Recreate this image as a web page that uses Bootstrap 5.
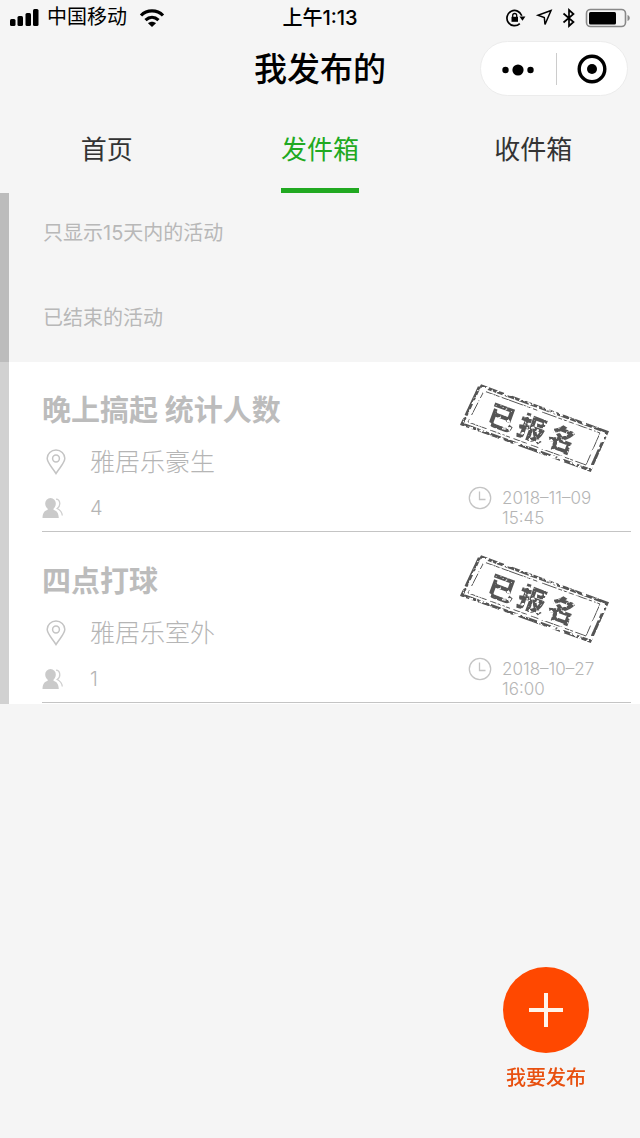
<!DOCTYPE html>
<html lang="zh-CN">
<head>
<meta charset="utf-8">
<meta name="viewport" content="width=device-width, initial-scale=1">
<title>我发布的</title>
<link href="https://cdn.jsdelivr.net/npm/bootstrap@5.3.0/dist/css/bootstrap.min.css" rel="stylesheet">
<style>
  body { background: #f5f5f5; color: #000; font-family: Inter, "Noto Sans CJK SC", sans-serif; }
  .status-bar { height: 35px; font-size: 20px; line-height: 37px; padding: 0 9px; }
  .status-side { flex: 1 1 0; }
  .clock-text { font-weight: 500; }
  .title-bar { height: 67px; padding: 6px 12px 6px; }
  .title-bar h1 { font-size: 33px; line-height: 56px; font-weight: 500; }
  .capsule { width: 148px; height: 55px; background: #fff; border: 1px solid #ececec; border-radius: 28px; }
  .capsule button { border: 0; background: none; padding: 0; height: 100%; }
  .capsule-line { width: 1px; height: 32px; background: #ccc; }
  .tab-row { height: 91px; font-size: 26px; }
  .tab-row a { color: #333; text-decoration: none; line-height: 38px; padding: 29px 0 19px; border-bottom: 5px solid transparent; }
  .tab-row a.active { color: #21a921; border-color: #21a921; }
  .notice { border-left: 9px solid #bcbcbc; padding: 25px 0 0 34px; height: 169px; color: #b8b8b8; font-size: 20px; }
  .notice p { line-height: 30px; margin-bottom: 55px; }
  .activity { background: #fff; border-left: 9px solid #d1d1d1; padding: 0 9px 1px 33px; color: #b5b5b5; }
  .activity-body { border-bottom: 1px solid #c4c4c4; height: 170px; }
  .activity h2 { font-size: 29px; line-height: 36px; font-weight: 700; margin: 31px 0 15px; color: #bcbcbc; }
  .place { font-size: 25px; line-height: 36px; font-weight: 300; margin-bottom: 16px; }
  .people { font-size: 20px; line-height: 24px; font-weight: 300; }
  .icon-cell { width: 48px; }
  .side-col { width: 171px; padding-top: 21px; }
  .when { font-size: 17px; line-height: 20px; font-weight: 300; gap: 10px; padding-left: 8px; margin-top: 13px; }
  .when time { width: 104px; padding-top: 2px; }
  .stamp-text { font: 900 28px "Noto Sans CJK SC", sans-serif; }
  .publish { right: 51px; bottom: 48px; border: 0; background: none; padding: 0; width: 86px; color: #e8500f; font-size: 20px; line-height: 24px; font-weight: 500; }
  .publish-disc { height: 86px; background: #ff4800; margin-bottom: 13px; }
</style>
</head>
<body>
<svg width="0" height="0" class="position-absolute" aria-hidden="true">
  <defs>
    <filter id="worn" x="0" y="0" width="100%" height="100%">
      <feTurbulence type="fractalNoise" baseFrequency="0.22" numOctaves="3" seed="8" result="n"/>
      <feColorMatrix in="n" type="matrix" values="0 0 0 0 0  0 0 0 0 0  0 0 0 0 0  9 0 0 0 -3.5" result="m"/>
      <feComposite in="SourceGraphic" in2="m" operator="in"/>
    </filter>
    <filter id="speckled" x="0" y="0" width="100%" height="100%">
      <feTurbulence type="fractalNoise" baseFrequency="0.25" numOctaves="2" seed="3" result="n"/>
      <feColorMatrix in="n" type="matrix" values="0 0 0 0 0  0 0 0 0 0  0 0 0 0 0  8 0 0 0 -2.4" result="m"/>
      <feComposite in="SourceGraphic" in2="m" operator="in"/>
    </filter>
    <symbol id="stamp" viewBox="0 0 150 90">
      <g filter="url(#worn)" fill="none" stroke="#555">
        <rect width="150" height="90" stroke="none" fill="none"/>
        <path d="M20 2.500 L147 49 L130 87 L2 41 Z" stroke-width="3"/>
        <path d="M24 8 L140 50 L126 82 L8 39 Z" stroke-width="1"/>
      </g>
      <g filter="url(#speckled)">
        <text class="stamp-text" x="-46 -14 18" y="10" transform="translate(72 46) rotate(20)" fill="#555">已报名</text>
      </g>
    </symbol>
    <symbol id="pin" viewBox="0 0 20 26">
      <path d="M10 24.500C6 18 1.200 14 1.200 9.300a8.800 8.300 0 0 1 17.600 0C18.800 14 14 18 10 24.500Z" fill="none" stroke="#c4c4c4" stroke-width="1.500"/>
      <circle cx="10" cy="9.500" r="3.400" fill="none" stroke="#c4c4c4" stroke-width="1.500"/>
    </symbol>
    <symbol id="people" viewBox="0 0 21 22">
      <path d="M8.500 1a5.300 5.300 0 0 1 5.300 5.600c0 2.500-1 4-2.300 5.200v1c3 1.200 5 2.400 5.300 8.200H.5C.7 15.200 2.700 14 5.700 12.800v-1C4.300 10.600 3.200 9 3.200 6.600A5.300 5.300 0 0 1 8.500 1Z" fill="#cacaca"/>
      <path d="M14 2.200c4.600.2 5 7 1.200 9.300 3.200 1.800 4.800 3.300 5.100 7" fill="none" stroke="#cfcfcf" stroke-width="1.300"/>
    </symbol>
    <symbol id="clock" viewBox="0 0 24 24">
      <circle cx="12" cy="12" r="10.700" fill="none" stroke="#c4c4c4" stroke-width="1.300"/>
      <path d="M11.500 5.500V13.500H17.500" fill="none" stroke="#c4c4c4" stroke-width="1.300"/>
    </symbol>
  </defs>
</svg>

<header>
  <div class="status-bar d-flex">
    <div class="status-side d-flex align-items-center">
      <svg width="30" height="18" viewBox="0 0 30 18" aria-hidden="true"><rect x="1" y="10" width="5.500" height="7" rx="1.500"/><rect x="8.500" y="7" width="5.500" height="10" rx="1.500"/><rect x="16.500" y="4" width="5.500" height="13" rx="1.500"/><rect x="24" y="0" width="5.500" height="17" rx="1.500"/></svg>
      <span class="ms-2 me-2">中国移动</span>
      <svg class="ms-1" width="26" height="18" viewBox="0 0 26 18" fill="none" stroke="#000" stroke-width="3.200" aria-hidden="true"><path d="M2 6.500C8 .4 18 .4 24 6.500M6.500 11.200c4-3.700 9-3.700 13 0"/><path d="M9 14.200c2.300-2 5.700-2 8 0L13 18Z" fill="#000" stroke="none"/></svg>
    </div>
    <span class="clock-text">上午1:13</span>
    <div class="status-side d-flex align-items-center justify-content-end">
      <svg width="126" height="22" viewBox="0 0 126 22" fill="none" stroke="#000" aria-hidden="true">
        <path d="M14.800 16.600A7.600 7.600 0 1 1 16.800 8.800" stroke-width="1.700"/><path d="M14.400 9.500h6l-2.900 4.200Z" fill="#000" stroke="none"/>
        <rect x="6.500" y="9.800" width="6.500" height="5" fill="#000" stroke="none"/><path d="M7.700 10V8.500a2 2 0 0 1 4 0V10" stroke-width="1.300"/>
        <path d="M46 3.500 33 8.300l6.300 2.200L40 17.500Z" stroke-width="1.500"/>
        <path d="M58.500 6.500l10 8.500-4.500 4V3l4.500 4-10 8.500" stroke-width="1.700"/>
        <rect x="81.500" y="2.500" width="39" height="17" rx="4" stroke="#888" stroke-width="1.600"/><rect x="84" y="5" width="27" height="12.500" rx="1.500" fill="#000" stroke="none"/><path d="M122.500 8v6c3-1 3-5 0-6Z" fill="#888" stroke="none"/>
      </svg>
    </div>
  </div>
  <div class="title-bar d-flex">
    <div class="status-side"></div>
    <h1 class="m-0">我发布的</h1>
    <div class="status-side d-flex justify-content-end">
      <div class="capsule d-flex align-items-center">
        <button type="button" class="flex-fill" aria-label="更多"><svg width="34" height="14" viewBox="0 0 34 14"><circle cx="4.500" cy="7" r="3.200"/><circle cx="17" cy="7" r="5.600"/><circle cx="29.500" cy="7" r="3.200"/></svg></button>
        <span class="capsule-line"></span>
        <button type="button" class="flex-fill" aria-label="关闭"><svg width="30" height="30" viewBox="0 0 30 30"><circle cx="15" cy="15" r="12.800" fill="none" stroke="#000" stroke-width="3.400"/><circle cx="15" cy="15" r="5"/></svg></button>
      </div>
    </div>
  </div>
  <nav class="tab-row row g-0 text-center">
    <div class="col"><a href="#" class="d-inline-block">首页</a></div>
    <div class="col"><a href="#" class="d-inline-block active" aria-current="page">发件箱</a></div>
    <div class="col"><a href="#" class="d-inline-block">收件箱</a></div>
  </nav>
</header>

<main>
  <section class="notice">
    <p>只显示15天内的活动</p>
    <p>已结束的活动</p>
  </section>
  <article class="activity">
    <div class="activity-body d-flex">
      <div class="flex-grow-1">
        <h2>晚上搞起 统计人数</h2>
        <div class="place d-flex align-items-center"><span class="icon-cell d-flex ps-1"><svg width="20" height="26" aria-hidden="true"><use href="#pin"/></svg></span>雅居乐豪生</div>
        <div class="people d-flex align-items-center"><span class="icon-cell d-flex"><svg width="21" height="22" aria-hidden="true"><use href="#people"/></svg></span>4</div>
      </div>
      <div class="side-col">
        <svg class="d-block" width="150" height="90"><use href="#stamp"/></svg>
        <div class="when d-flex"><svg width="24" height="24" aria-hidden="true"><use href="#clock"/></svg><time datetime="2018-11-09T15:45">2018–11–09 15:45</time></div>
      </div>
    </div>
  </article>
  <article class="activity">
    <div class="activity-body d-flex">
      <div class="flex-grow-1">
        <h2>四点打球</h2>
        <div class="place d-flex align-items-center"><span class="icon-cell d-flex ps-1"><svg width="20" height="26" aria-hidden="true"><use href="#pin"/></svg></span>雅居乐室外</div>
        <div class="people d-flex align-items-center"><span class="icon-cell d-flex"><svg width="21" height="22" aria-hidden="true"><use href="#people"/></svg></span>1</div>
      </div>
      <div class="side-col">
        <svg class="d-block" width="150" height="90"><use href="#stamp"/></svg>
        <div class="when d-flex"><svg width="24" height="24" aria-hidden="true"><use href="#clock"/></svg><time datetime="2018-10-27T16:00">2018–10–27 16:00</time></div>
      </div>
    </div>
  </article>
</main>

<button type="button" class="publish position-fixed text-nowrap">
  <span class="publish-disc rounded-circle d-flex align-items-center justify-content-center"><svg width="34" height="34" viewBox="0 0 34 34" aria-hidden="true"><path d="M17 0v34M0 17h34" stroke="#fff4ea" stroke-width="4"/></svg></span>
  我要发布
</button>
<script src="https://cdn.jsdelivr.net/npm/bootstrap@5.3.0/dist/js/bootstrap.bundle.min.js"></script>
</body>
</html>
